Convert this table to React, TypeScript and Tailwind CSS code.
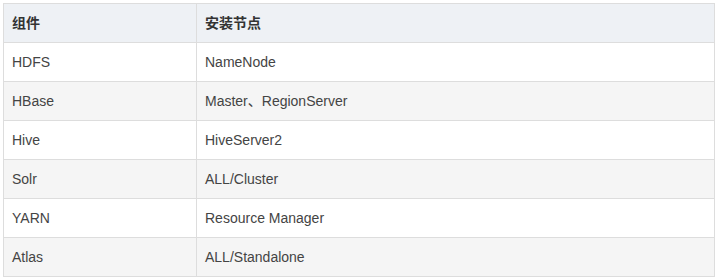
import React from "react";

const rows: [string, string][] = [
  ["HDFS", "NameNode"],
  ["HBase", "Master、RegionServer"],
  ["Hive", "HiveServer2"],
  ["Solr", "ALL/Cluster"],
  ["YARN", "Resource Manager"],
  ["Atlas", "ALL/Standalone"],
];

export default function App() {
  return (
    <div
      className="w-[719px] h-[278px] bg-white pt-[3px] pl-[3px]"
      style={{ fontFamily: '"Liberation Sans", Arial, "Noto Sans CJK SC", sans-serif' }}
    >
      <table className="border-collapse w-[712px] text-[14px] text-[#444]">
        <thead>
          <tr className="bg-[#eef1f5] h-[39px]">
            <th className="border border-[#dddddd] text-left font-bold px-2 w-[193px] text-[#333]">组件</th>
            <th className="border border-[#dddddd] text-left font-bold px-2 text-[#333]">安装节点</th>
          </tr>
        </thead>
        <tbody>
          {rows.map(([a, b], i) => (
            <tr key={a} className={`h-[39px] ${i % 2 === 1 ? "bg-[#f5f5f5]" : "bg-white"}`}>
              <td className="border border-[#dddddd] px-2">{a}</td>
              <td className="border border-[#dddddd] px-2">{b}</td>
            </tr>
          ))}
        </tbody>
      </table>
    </div>
  );
}
